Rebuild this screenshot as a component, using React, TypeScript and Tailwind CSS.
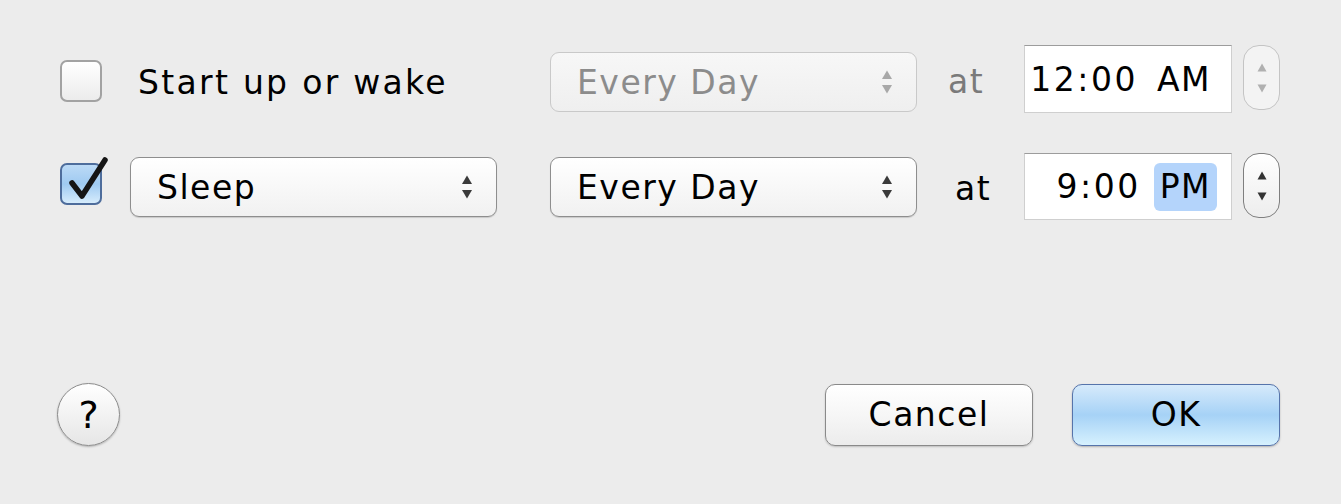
import React from "react";

const font = { fontFamily: '"DejaVu Sans", "Liberation Sans", sans-serif' };

const PopupArrows = ({ dim }: { dim?: boolean }) => (
  <svg width="12" height="24" viewBox="0 0 12 24" className="shrink-0">
    <path d="M6 0.5 L11 9 L1 9 Z" fill={dim ? "#a8a8a8" : "#3a3a3a"} />
    <path d="M6 23.5 L11 15 L1 15 Z" fill={dim ? "#a8a8a8" : "#3a3a3a"} />
  </svg>
);

const Popup = ({ label, dim }: { label: string; dim?: boolean }) => (
  <div
    className={`w-[367px] h-[60px] rounded-[9px] border flex items-center justify-between pl-[26px] pr-[23px] ${
      dim
        ? "border-[#c9c9c9] bg-gradient-to-b from-[#f7f7f7] to-[#efefef] text-[#8c8c8c]"
        : "border-[#8e8e8e] bg-gradient-to-b from-white to-[#f1f1f1] text-black shadow-[0_1px_1px_rgba(0,0,0,0.15)]"
    }`}
  >
    <span className="text-[33px] tracking-[1.5px] leading-none">{label}</span>
    <PopupArrows dim={dim} />
  </div>
);

const Stepper = ({ dim }: { dim?: boolean }) => (
  <div
    className={`ml-[11px] w-[37px] h-[65px] rounded-[16px] border flex flex-col items-center justify-center gap-[12px] ${
      dim
        ? "border-[#c4c4c4] bg-[#f3f3f3]"
        : "border-[#7f7f7f] bg-gradient-to-b from-white to-[#ededed]"
    }`}
  >
    <svg width="10" height="9" viewBox="0 0 10 9">
      <path d="M5 0.5 L9.5 8.5 L0.5 8.5 Z" fill={dim ? "#b0b0b0" : "#333"} />
    </svg>
    <svg width="10" height="9" viewBox="0 0 10 9">
      <path d="M5 8.5 L9.5 0.5 L0.5 0.5 Z" fill={dim ? "#b0b0b0" : "#333"} />
    </svg>
  </div>
);

const TimeField = ({ time, ampm, selected }: { time: string; ampm: string; selected?: boolean }) => (
  <div className="w-[208px] h-full bg-white border border-[#cfcfcf] border-t-[#9c9c9c] flex items-center justify-end pr-[14px] text-[33px] tracking-[1.5px] leading-none text-black">
    <span className="tracking-[2.5px]">{time}</span>
    <span
      className={`ml-[13px] px-[6px] h-[48px] flex items-center rounded-[6px] ${
        selected ? "bg-[#b4d4fb]" : ""
      }`}
    >
      {ampm}
    </span>
  </div>
);

export default function App() {
  return (
    <div className="w-[1341px] h-[504px] bg-[#ececec] overflow-hidden" style={font}>
      <div className="pl-[60px] pt-[45px]">
        {/* start up row */}
        <div className="flex items-start h-[68px]">
          <div className="mt-[15px] w-[42px] h-[42px] rounded-[7px] border-2 border-[#a2a2a2] bg-gradient-to-b from-white to-[#ececec]" />
          <div className="ml-[28px] w-[367px] h-[68px] flex items-center pl-[8px] pt-[6px]">
            <span className="text-[33px] tracking-[2.3px] leading-none text-black">Start up or wake</span>
          </div>
          <div className="ml-[53px] mt-[7px]">
            <Popup label="Every Day" dim />
          </div>
          <div className="w-[107px] h-full flex items-center pl-[31px] pt-[4px] text-[33px] tracking-[1.5px] leading-none text-[#7a7a7a]">
            at
          </div>
          <TimeField time="12:00" ampm="AM" />
          <Stepper dim />
        </div>

        {/* sleep row */}
        <div className="flex items-start h-[67px] mt-[40px]">
          <div className="relative mt-[10px] w-[42px] h-[42px] rounded-[7px] border-2 border-[#4e6d9c] bg-gradient-to-b from-[#bcdaf6] via-[#9fcaf1] to-[#d6ecfc]">
            <svg
              width="48"
              height="54"
              viewBox="0 0 48 54"
              className="absolute left-[2px] top-[-10px]"
            >
              <path
                d="M8 28 L18 41 L41 5"
                fill="none"
                stroke="#151515"
                strokeWidth="5.5"
                strokeLinecap="round"
                strokeLinejoin="round"
              />
            </svg>
          </div>
          <div className="ml-[28px] mt-[4px]">
            <Popup label="Sleep" />
          </div>
          <div className="ml-[53px] mt-[4px]">
            <Popup label="Every Day" />
          </div>
          <div className="w-[107px] h-full flex items-center pl-[38px] pt-[4px] text-[33px] tracking-[1.5px] leading-none text-black">
            at
          </div>
          <TimeField time="9:00" ampm="PM" selected />
          <Stepper />
        </div>
      </div>

      {/* buttons */}
      <div className="flex items-center mt-[163px] pl-[57px] pr-[61px]">
        <div className="w-[63px] h-[63px] rounded-full border border-[#8c8c8c] bg-gradient-to-b from-white to-[#e6e6e6] shadow-[0_1px_2px_rgba(0,0,0,0.25)] flex items-center justify-center text-[38px] leading-none text-black">
          ?
        </div>
        <div className="flex-1" />
        <button className="w-[208px] h-[62px] rounded-[10px] border border-[#8a8a8a] bg-gradient-to-b from-white via-[#f6f6f6] to-[#ececec] shadow-[0_1px_2px_rgba(0,0,0,0.2)] text-[33px] tracking-[1.5px] leading-none text-black">
          Cancel
        </button>
        <button className="ml-[39px] w-[208px] h-[62px] rounded-[10px] border border-[#5674ab] bg-gradient-to-b from-[#d6eafb] via-[#a6d2f6] to-[#d6f1fe] shadow-[0_1px_2px_rgba(0,0,0,0.25)] text-[33px] tracking-[1.5px] leading-none text-black">
          OK
        </button>
      </div>
    </div>
  );
}
